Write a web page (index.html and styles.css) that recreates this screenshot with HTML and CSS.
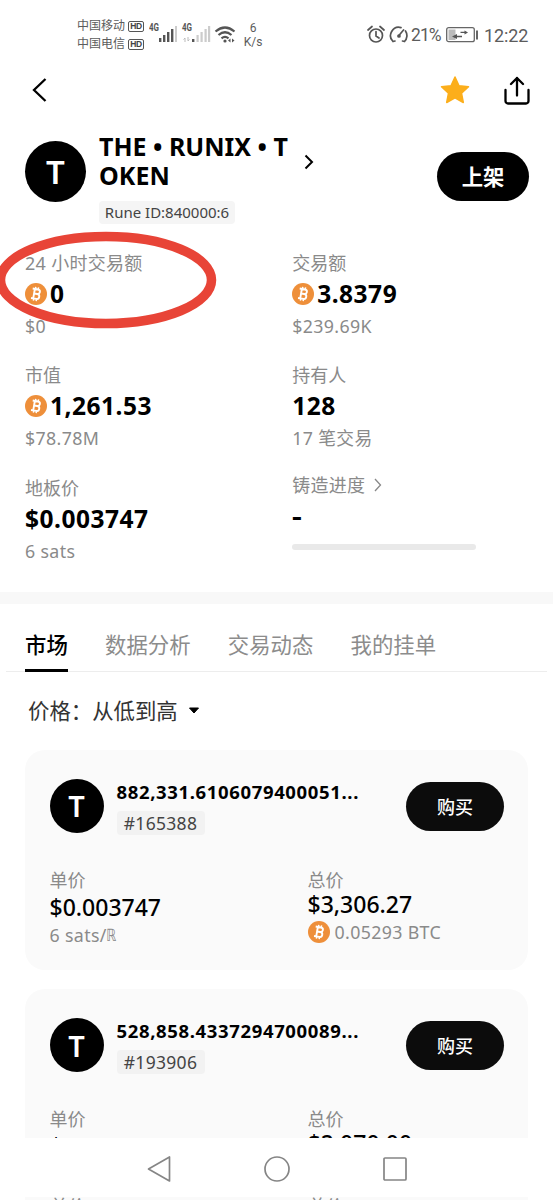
FILE: index.html
```
<!DOCTYPE html>
<html lang="zh-CN">
<head>
<meta charset="utf-8">
<title>THE • RUNIX • TOKEN</title>
<link rel="stylesheet" href="styles.css">
</head>
<body>
<svg width="0" height="0" class="defs">
  <symbol id="btc" viewBox="0 0 22 22">
    <circle cx="11" cy="11" r="11" fill="#ee8f3a"/>
    <g transform="rotate(10 11 11)" fill="none" stroke="#fff" stroke-width="1.900">
      <path d="M9 6v10M6.800 6.200h5.400a2.200 2.200 0 0 1 0 4.600H9M12.200 10.800a2.500 2.500 0 0 1 0 5H6.800"/>
      <path d="M9.600 4v2M12.400 4v2M9.600 16v2M12.400 16v2" stroke-width="1.500"/>
    </g>
  </symbol>
</svg>
<div class="screen">
  <header class="status">
    <div class="carriers">
      <div>中国移动<b>HD</b></div>
      <div>中国电信<b>HD</b></div>
    </div>
    <svg class="signals" width="90" height="24" viewBox="0 0 90 24">
      <g fill="#555">
        <rect x="10" y="16" width="2.400" height="4"/><rect x="14" y="13" width="2.400" height="7"/><rect x="18" y="10" width="2.400" height="10"/><rect x="22" y="7" width="2.400" height="13"/>
        <rect x="43" y="17" width="2.400" height="3"/>
      </g>
      <g fill="#ccc"><rect x="26" y="4" width="2" height="16"/><rect x="47.500" y="13" width="2.200" height="7"/><rect x="51.500" y="10" width="2.200" height="10"/><rect x="55.500" y="7" width="2.200" height="13"/><rect x="59" y="4" width="2.200" height="16"/></g>
      <path d="M36 20v-4l-1.500 1.500M39 15v4l1.500-1.500" stroke="#bbb" fill="none"/>
      <g fill="none" stroke="#555" stroke-width="2.200"><path d="M66.500 9.500q9.500-8 19 0M69.500 13q6.500-5.500 13 0M72.500 16.300q3.500-2.800 7 0"/></g>
      <circle cx="76" cy="19" r="1.600" fill="#555"/><path d="M79 18.500l2.500-2v4zM85.500 18.500l-2.500-2v4z" fill="#555"/>
      <text x="0" y="8.500" class="net" textLength="10" lengthAdjust="spacingAndGlyphs">4G</text><text x="33" y="8.500" class="net" textLength="10" lengthAdjust="spacingAndGlyphs">4G</text>
    </svg>
    <div class="speed"><div>6</div><div>K/s</div></div>
    <div class="spacer"></div>
    <svg width="42" height="20" viewBox="0 0 42 20" fill="none" stroke="#555" stroke-width="1.700" stroke-linecap="round">
      <circle cx="9" cy="10.500" r="6.500"/><path d="M9 6.500v4.500l3 2M1 5l4-3.500M17 5l-4-3.500"/>
      <path d="M26 16.500A8.300 8.300 0 0 1 34 2.600M38.500 6A8.300 8.300 0 0 1 37.500 16.500M31.500 11l5-6M26 16.500l2-.5M37.500 16.500l-2-.5"/>
      <circle cx="32" cy="11" r="1" fill="#555"/>
    </svg>
    <span class="battery-text">21%</span>
    <svg class="battery" width="33" height="16" viewBox="0 0 33 16">
      <rect x=".7" y=".7" width="27.600" height="14" rx="2" fill="none" stroke="#666" stroke-width="1.300"/>
      <rect x="2.500" y="2.500" width="7" height="10.500" fill="#bbb"/>
      <path d="M6 9.500l5-2.500v1.700h5v1.500h-5v1.800zM22 5.500l-3.500-2v1.300h-4v1.300h4v1.500z" fill="#555"/>
      <rect x="30" y="3.500" width="2" height="9" fill="#666"/>
    </svg>
    <span class="clock">12:22</span>
  </header>

  <nav class="topbar">
    <svg width="16" height="26" viewBox="0 0 16 26" fill="none" stroke="#000" stroke-width="2.300"><path d="M14.500 2L3 13l11.500 11"/></svg>
    <div class="spacer"></div>
    <svg class="star" width="30" height="30" viewBox="0 0 30 30"><path d="M15 2l4 8.700 9.500 1.100-7 6.400 1.800 9.300-8.300-4.600-8.300 4.600 1.800-9.300-7-6.400 9.500-1.100z" fill="#fcae1b" stroke="#fcae1b" stroke-width="1.500" stroke-linejoin="round"/></svg>
    <svg width="26" height="30" viewBox="0 0 26 30" fill="none" stroke="#000" stroke-width="2.300" stroke-linecap="round" stroke-linejoin="round"><path d="M13 20.500V3M7 9l6-6 6 6M1.500 15v11a2.500 2.500 0 0 0 2.500 2.500h18a2.500 2.500 0 0 0 2.500-2.500V15"/></svg>
  </nav>

  <section class="token">
    <div class="avatar avatar-lg">T</div>
    <div class="token-info">
      <h1>THE • RUNIX • T<br>OKEN</h1>
      <span class="rune-id">Rune ID:840000:6</span>
    </div>
    <svg class="token-arrow" width="10" height="16" viewBox="0 0 10 16" fill="none" stroke="#000" stroke-width="2"><path d="M1.500 1.500L8 8l-6.500 6.500"/></svg>
    <div class="spacer"></div>
    <button class="list-btn">上架</button>
  </section>

  <section class="stats">
    <div class="stat">
      <div class="label wide">24 小时交易额</div>
      <div class="value"><svg class="coin"><use href="#btc"/></svg>0</div>
      <div class="sub">$0</div>
      <svg class="mark" width="224" height="104" viewBox="0 0 224 104"><ellipse cx="112" cy="52" rx="105.500" ry="43.500" fill="none" stroke="#e84437" stroke-width="9.500"/></svg>
    </div>
    <div class="stat">
      <div class="label">交易额</div>
      <div class="value"><svg class="coin"><use href="#btc"/></svg>3.8379</div>
      <div class="sub">$239.69K</div>
    </div>
    <div class="stat">
      <div class="label">市值</div>
      <div class="value"><svg class="coin"><use href="#btc"/></svg>1,261.53</div>
      <div class="sub">$78.78M</div>
    </div>
    <div class="stat">
      <div class="label">持有人</div>
      <div class="value">128</div>
      <div class="sub">17 笔交易</div>
    </div>
    <div class="stat">
      <div class="label">地板价</div>
      <div class="value">$0.003747</div>
      <div class="sub">6 sats</div>
    </div>
    <div class="stat mint">
      <div class="label">铸造进度<svg width="8" height="14" viewBox="0 0 8 14" fill="none" stroke="#888" stroke-width="1.300"><path d="M1 1l5.500 6L1 13"/></svg></div>
      <div class="value dash">-</div>
      <div class="progress"></div>
    </div>
  </section>

  <div class="divider"></div>

  <div class="tabs">
    <span class="tab active">市场</span><span class="tab">数据分析</span><span class="tab">交易动态</span><span class="tab">我的挂单</span>
  </div>
  <div class="sort">价格：从低到高<svg width="12" height="7" viewBox="0 0 12 7"><path d="M1.500 1h9L6 6z" fill="#000" stroke="#000" stroke-linejoin="round"/></svg></div>

  <main class="cards">
    <article class="card">
      <div class="card-head">
        <div class="avatar">T</div>
        <div class="card-info"><div class="amount">882,331.6106079400051...</div><span class="tag">#165388</span></div>
        <button class="buy">购买</button>
      </div>
      <div class="prices">
        <div class="unit"><div class="label">单价</div><div class="price">$0.003747</div><div class="sub">6 sats/<span class="rune">ℝ</span></div></div>
        <div class="total"><div class="label">总价</div><div class="price">$3,306.27</div><div class="sub"><svg class="coin"><use href="#btc"/></svg>0.05293 BTC</div></div>
      </div>
    </article>
    <article class="card">
      <div class="card-head">
        <div class="avatar">T</div>
        <div class="card-info"><div class="amount">528,858.4337294700089...</div><span class="tag">#193906</span></div>
        <button class="buy">购买</button>
      </div>
      <div class="prices">
        <div class="unit"><div class="label">单价</div><div class="price">$0.003800</div></div>
        <div class="total"><div class="label">总价</div><div class="price">$2,070.00</div></div>
      </div>
    </article>
  </main>

  <footer class="system-nav">
    <svg width="26" height="28" viewBox="0 0 26 28"><path d="M23.500 2v24L2.500 14z"/></svg>
    <svg width="28" height="28" viewBox="0 0 28 28"><circle cx="14" cy="14" r="12"/></svg>
    <svg width="26" height="26" viewBox="0 0 26 26"><rect x="2" y="2" width="22" height="22" rx="1"/></svg>
  </footer>
  <div class="peek"><span>单价</span><span>总价</span></div>
</div>
</body>
</html>
```

FILE: styles.css
```
* { box-sizing: border-box; }
body {
  margin: 0;
  background: #fff;
  color: #000;
  font-family: "Noto Sans", "Noto Sans CJK SC", sans-serif;
}
button { border: 0; padding: 0; font-family: inherit; color: #fff; background: #000; }
.defs { position: absolute; }
.screen { width: 553px; height: 1200px; overflow: hidden; display: flex; flex-direction: column; }
.screen > * { flex-shrink: 0; }
.spacer { flex: 1; }

.status { height: 60px; padding: 10px 24px 0 77px; display: flex; align-items: center; color: #5c5c5c; }
.carriers { font-size: 12px; line-height: 18px; width: 68px; white-space: nowrap; }
.carriers div { display: flex; align-items: center; gap: 3px; }
.carriers b {
  font: bold 8.500px/9px "Liberation Sans", sans-serif;
  width: 16px; height: 11px; border-radius: 2px; border: 1px solid #555;
  color: #444; text-align: center;
  display: flex; justify-content: center; letter-spacing: -0.3px;
}
.signals { margin-left: 4px; margin-top: -2px; }
.net { font: bold 10px "Roboto", sans-serif; fill: #555; }
.speed { font: 12px/14px "Roboto", "Noto Sans", sans-serif; text-align: center; width: 24px; margin-left: 2px; }
.battery-text { font: 17.500px "Roboto", sans-serif; margin-left: 2px; letter-spacing: -0.9px; width: 30px; }
.battery { margin-left: 5px; }
.clock { font: 18px "Roboto", sans-serif; margin-left: 5px; width: 45px; letter-spacing: -0.1px; }

.topbar { height: 60px; padding: 0 23px 0 31px; display: flex; align-items: center; }
.star { margin-right: 34px; }

.token { height: 128px; padding: 12px 24px 0 25px; display: flex; align-items: flex-start; }
.avatar {
  width: 54px; height: 54px; border-radius: 50%;
  background: #000; color: #fff;
  display: flex; align-items: center; justify-content: center;
  font-weight: 600; font-size: 29px; flex-shrink: 0;
}
.avatar-lg { width: 61px; height: 61px; font-size: 33px; margin-top: 9px; }
.token-info { width: 200px; margin-left: 13px; }
h1 { margin: 0; font-size: 25px; line-height: 29px; font-weight: 700; white-space: nowrap; }
.rune-id {
  display: block; width: 136px; height: 23px; margin-top: 11px;
  border-radius: 4px; background: #f5f5f5; color: #444;
  font-size: 15px; line-height: 23px; text-align: center; white-space: nowrap;
}
.token-arrow { margin: 22px 0 0 5px; }
.list-btn { width: 92px; height: 49px; border-radius: 25px; margin-top: 20px; padding-bottom: 2px; font-size: 21.300px; font-weight: 700; }

.stats {
  height: 344px; padding-left: 25px;
  display: grid; grid-template-columns: 267.200px 1fr; grid-auto-rows: 112.400px; align-content: start;
}
.stat { position: relative; white-space: nowrap; }
.label { font-size: 18px; line-height: 30px; height: 30px; color: #8a8a8a; }
.wide { letter-spacing: 0.3px; }
.value { display: flex; align-items: center; height: 32px; font-size: 24.500px; font-weight: 700; line-height: 32px; letter-spacing: 0.5px; }
.value .coin { margin-right: 3px; }
.dash { padding-left: 0; transform: scaleX(1.25); transform-origin: left center; }
.coin { width: 22px; height: 22px; flex-shrink: 0; }
.stat .sub { line-height: 32px; }
.sub { display: flex; align-items: center; font-size: 17.800px; letter-spacing: 0.35px; color: #8a8a8a; }
.mark { position: absolute; left: -31.500px; top: -20px; }
.mint { margin-top: -3px; }
.mint .label { display: flex; align-items: center; gap: 9px; letter-spacing: 0.3px; }
.progress { width: 184px; height: 6px; border-radius: 3px; background: #e9e9e9; margin-top: 12px; }

.divider { height: 12px; background: #f8f8f8; }

.tabs { height: 68px; margin: 0 6px; padding-left: 19px; display: flex; gap: 37.200px; border-bottom: 1px solid #ededed; }
.tab { font-size: 21.400px; line-height: 81px; height: 68px; color: #8c8c8c; }
.tab.active { color: #000; font-weight: 500; border-bottom: 3px solid #000; }

.sort { height: 77.500px; padding-left: 28px; display: flex; align-items: center; gap: 10px; font-size: 21.400px; line-height: 30px; color: #333; }

.cards { height: 388.500px; padding: 0 25px; overflow: hidden; display: flex; flex-direction: column; gap: 19.500px; }
.card { height: 220px; flex-shrink: 0; border-radius: 20px; background: #fafafa; padding: 29px 24px 0 24.500px; }
.card-head { display: flex; align-items: flex-start; height: 86px; }
.card-info { width: 289.500px; margin-left: 13px; }
.amount { font-size: 18.500px; line-height: 26px; font-weight: 700; white-space: nowrap; letter-spacing: 0.640px; }
.tag {
  display: block; width: 88px; height: 24px; margin-top: 6px; border-radius: 4px;
  background: #f2f2f2; color: #444; font-size: 17.500px; letter-spacing: 0.3px; line-height: 24px; text-align: center;
}
.buy { width: 98px; height: 49px; margin-top: 3px; padding-bottom: 1px; border-radius: 25px; background: #0c0c0c; font-size: 18px; font-weight: 500; flex-shrink: 0; }
.prices { display: grid; grid-template-columns: 258px 1fr; }
.price { font-size: 23px; font-weight: 500; line-height: 28px; margin-top: -2px; }
.prices .sub { line-height: 28px; }
.total .price { margin-top: -5px; }
.total .coin { margin-right: 5px; }
.rune { font-family: "DejaVu Sans", sans-serif; font-size: 17px; width: 9px; margin-left: -1px; transform: scaleX(0.75); transform-origin: left center; }

.system-nav { height: 59px; background: #fff; display: flex; align-items: center; justify-content: center; gap: 91px; padding: 3px 0 0 0; }
.system-nav svg { fill: none; stroke: #858585; stroke-width: 1.700; stroke-linejoin: round; }
.peek {
  height: 3px; margin: 0 25px; padding-left: 25px; overflow: hidden; background: #fafafa;
  display: grid; grid-template-columns: 258px 1fr; color: #8a8a8a; font-size: 18px; line-height: 18px;
}
```
